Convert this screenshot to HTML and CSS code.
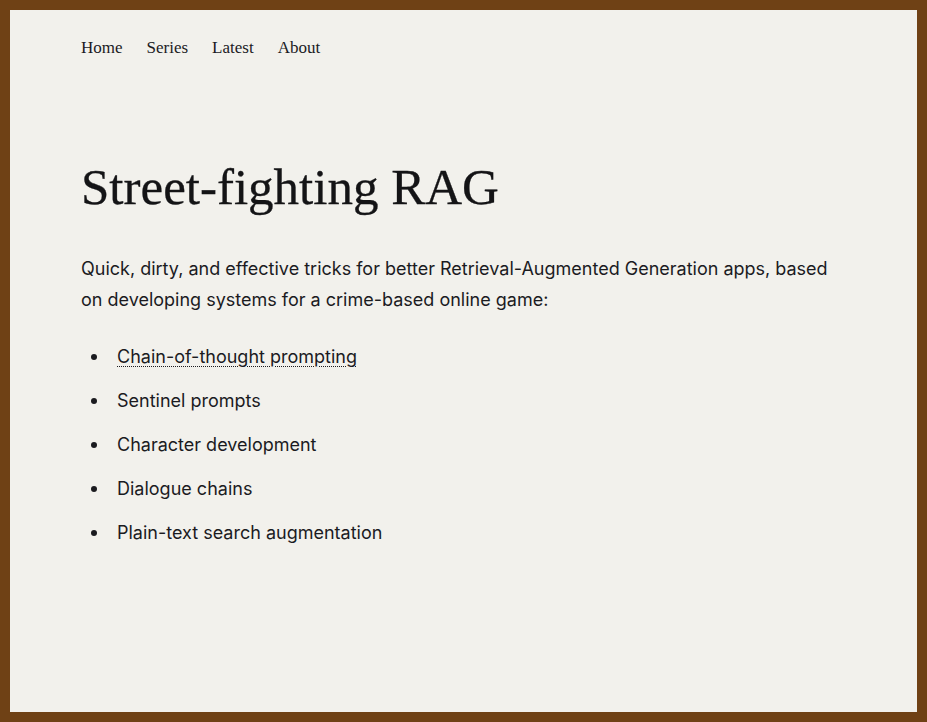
FILE: index.html
```html
<!DOCTYPE html>
<html lang="en">
<head>
<meta charset="utf-8">
<title>Street-fighting RAG</title>
<link rel="stylesheet" href="styles.css">
</head>
<body>
<div class="page">
  <nav class="nav">
    <a href="#">Home</a>
    <a href="#">Series</a>
    <a href="#">Latest</a>
    <a href="#">About</a>
  </nav>
  <main class="content">
    <h1 class="title">Street-fighting RAG</h1>
    <p class="intro">Quick, dirty, and effective tricks for better Retrieval-Augmented Generation apps, based on developing systems for a crime-based online game:</p>
    <ul class="list">
      <li><a class="link" href="#">Chain-of-thought prompting</a></li>
      <li>Sentinel prompts</li>
      <li>Character development</li>
      <li>Dialogue chains</li>
      <li>Plain-text search augmentation</li>
    </ul>
  </main>
</div>
</body>
</html>
```

FILE: styles.css
```css
* { box-sizing: border-box; }
html, body { margin: 0; padding: 0; }
body {
  background: #f2f1ec;
  color: #1b1b1f;
}
.page {
  min-height: 100vh;
  border: 10px solid #6f4115;
  padding: 28px 71px 0 71px;
}
.nav {
  display: flex;
  gap: 24px;
  font-family: "Liberation Serif", serif;
  font-size: 17px;
  line-height: 20px;
}
.nav a {
  color: #1b1b1f;
  text-decoration: none;
}
.content {
  max-width: 760px;
}
.title {
  font-family: "Liberation Serif", serif;
  font-weight: normal;
  font-size: 51px;
  line-height: 60px;
  color: #141416;
  margin: 99px 0 0 0;
  -webkit-text-stroke: 0.3px #141416;
}
.intro {
  font-family: Inter, sans-serif;
  font-size: 18px;
  line-height: 31px;
  margin: 36px 0 0 0;
}
.list {
  font-family: Inter, sans-serif;
  font-size: 18px;
  line-height: 24px;
  margin: 30px 0 0 0;
  padding-left: 36px;
  list-style: none;
  display: flex;
  flex-direction: column;
  gap: 20px;
}
.list li::before {
  content: "";
  display: inline-block;
  width: 6px;
  height: 6px;
  border-radius: 50%;
  background: #1b1b1f;
  margin-left: -26px;
  margin-right: 20px;
  vertical-align: 3px;
}
.link {
  color: #1b1b1f;
  text-decoration: underline dotted 1px;
  text-underline-offset: 3px;
}
```
